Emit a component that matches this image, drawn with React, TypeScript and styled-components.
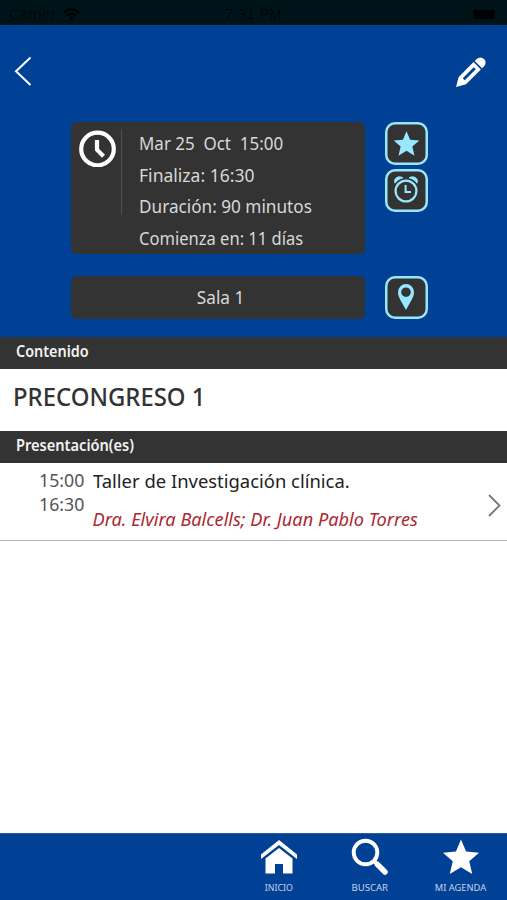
import React from 'react';
import styled, { createGlobalStyle } from 'styled-components';

const BLUE = '#004195';
const DARK = '#333333';
const CYAN = '#97e8ff';

const GlobalStyle = createGlobalStyle`
  * { box-sizing: border-box; }
  body { margin: 0; background: #fff; }
  svg { display: block; flex: none; }
`;

const Screen = styled.div`
  display: flex;
  flex-direction: column;
  height: 900px;
  overflow: hidden;
  font-family: 'Noto Sans', sans-serif;
`;

const Text = styled.span<{ $stretch?: number; $origin?: string }>`
  display: block;
  width: max-content;
  white-space: pre;
  transform: scaleX(${(p) => p.$stretch ?? 1});
  transform-origin: ${(p) => p.$origin ?? 'left'} center;
`;

const StatusBar = styled.header`
  display: grid;
  grid-template-columns: 1fr auto 1fr;
  align-items: center;
  height: 25px;
  flex: none;
  padding: 3px 12px 0 9px;
  background: #001318;
  color: #000608;
  font: 14px 'Liberation Sans', sans-serif;
  letter-spacing: 0.6px;
`;

const Carrier = styled.div`
  display: flex;
  align-items: center;
  gap: 7px;
`;

const Clock = styled.span`
  padding-left: 3px;
  font-weight: 500;
`;

const Battery = styled.div`
  justify-self: end;
  width: 22px;
  height: 9px;
  border-radius: 2px;
  background: #000204;
`;

const Hero = styled.section`
  height: 312px;
  flex: none;
  background: ${BLUE};
`;

const NavBar = styled.nav`
  display: flex;
  justify-content: space-between;
  align-items: center;
  height: 97px;
  padding: 0 20px 6px 14px;
`;

const HeroRow = styled.div<{ $gap?: number }>`
  display: flex;
  gap: 19.5px;
  padding-left: 71px;
  margin-top: ${(p) => p.$gap ?? 0}px;
`;

const InfoCard = styled.div`
  display: flex;
  width: 294px;
  height: 132px;
  padding: 5px 0 0 8px;
  border-radius: 6px;
  background: ${DARK};
`;

const ClockHolder = styled.div`
  display: flex;
  width: 43px;
  height: 86px;
  margin-top: 2px;
  border-right: 1px solid #505050;
`;

const Details = styled.div`
  padding-left: 17px;
  color: #d8d8d8;
  font-size: 18.5px;
  line-height: 31.7px;
`;

const RoomCard = styled.div`
  display: flex;
  align-items: center;
  justify-content: center;
  width: 294px;
  height: 43px;
  padding: 0 0 2px 6px;
  border-radius: 6px;
  background: ${DARK};
  color: #d8d8d8;
  font-size: 18.5px;
`;

const Actions = styled.div`
  display: flex;
  flex-direction: column;
  gap: 3.5px;
`;

const Tile = styled.button`
  display: flex;
  align-items: center;
  justify-content: center;
  width: 43px;
  height: 43px;
  padding: 0 0 1px;
  border: 0;
  border-radius: 10px;
  box-shadow: inset 0 0 0 2.5px ${CYAN};
  background: ${DARK};
  color: ${CYAN};
`;

const SectionBar = styled.h2`
  display: flex;
  align-items: center;
  height: 32px;
  flex: none;
  margin: 0;
  padding: 0 16px 4px;
  background: ${DARK};
  color: #f2f2f2;
  font-size: 16px;
  font-weight: 600;
`;

const Title = styled.h1`
  display: flex;
  align-items: center;
  height: 62px;
  flex: none;
  margin: 0;
  padding: 0 13px 8px;
  color: ${DARK};
  font-size: 24.5px;
  font-weight: 500;
`;

const Session = styled.article`
  display: grid;
  grid-template-columns: 92.5px 1fr auto;
  height: 78px;
  flex: none;
  padding-right: 6px;
  border-bottom: 1px solid #b4b4b4;
`;

const Times = styled.div`
  padding: 6px 0 0 38.5px;
  color: #555;
  font-size: 18px;
  line-height: 23.5px;
`;

const Talk = styled.div`
  padding-top: 5px;
  color: #222;
  font-size: 18.8px;
  line-height: 26px;
`;

const Speakers = styled.div`
  padding-top: 12px;
  color: #ad2830;
  font-size: 18.2px;
  font-style: italic;
`;

const Chevron = styled.div`
  display: flex;
  align-items: center;
  padding-top: 8px;
`;

const TabBar = styled.footer`
  display: flex;
  justify-content: flex-end;
  height: 67px;
  margin-top: auto;
  flex: none;
  padding-right: 1px;
  border-top: 1px solid #2d5d9e;
  background: ${BLUE};
`;

const Tab = styled.div`
  display: flex;
  flex-direction: column;
  align-items: center;
  width: 91px;
  padding-top: 4px;
  color: #fff;
`;

const TabLabel = styled.div`
  margin-top: 5px;
  color: #c4d4ec;
  font-size: 9.3px;
  line-height: 14px;
`;

const STAR = 'M12 1 L15.2 8.6 L23.4 9.3 L17.2 14.7 L19.1 22.8 L12 18.5 L4.9 22.8 L6.8 14.7 L0.6 9.3 L8.8 8.6 Z';

const Star = ({ size }: { size: number }) => (
  <svg width={size} height={size} viewBox="0 0 24 24" fill="currentColor">
    <path d={STAR} />
  </svg>
);

const details: [string, number][] = [
  ['Mar 25  Oct  15:00', 0.916],
  ['Finaliza: 16:30', 0.948],
  ['Duración: 90 minutos', 0.928],
  ['Comienza en: 11 días', 0.894],
];

export default function App() {
  return (
    <Screen>
      <GlobalStyle />
      <StatusBar>
        <Carrier>
          Carrier
          <svg width="17" height="13" viewBox="0 0 17 13" fill="none" stroke="#000204" strokeWidth="2.5">
            <path d="M1 4.7a10.6 10.6 0 0 1 15 0M3.8 7.6a6.6 6.6 0 0 1 9.4 0" />
            <path d="M8.5 12.5 6 9.8a3.6 3.6 0 0 1 5 0Z" fill="#000204" stroke="none" />
          </svg>
        </Carrier>
        <Clock>7:31 PM</Clock>
        <Battery />
      </StatusBar>

      <Hero>
        <NavBar>
          <svg width="18" height="30" viewBox="0 0 18 30" fill="none" stroke="#fff" strokeWidth="2">
            <path d="M16.5 1.5 2 15.2 16.5 29" />
          </svg>
          <svg width="32" height="32" viewBox="0 0 32 32">
            <g transform="translate(1 32) rotate(-45)">
              <path d="M0 0 9-5.2H30V5.2H9Z" fill="#fff" />
              <path d="M31.7-5.2H34.500a5.200 5.200 0 0 1 0 10.400H31.7Z" fill="#fff" />
              <path d="M11-1.4H26.500V1.4H11Z" fill={BLUE} />
            </g>
          </svg>
        </NavBar>

        <HeroRow>
          <InfoCard>
            <ClockHolder>
              <svg width="38" height="38" viewBox="0 0 38 38" fill="none" stroke="#fff">
                <circle cx="18.5" cy="20" r="16.3" strokeWidth="4.2" />
                <path d="M18 11V20.7L24.5 27.2" strokeWidth="4.2" />
              </svg>
            </ClockHolder>
            <Details>
              {details.map(([label, stretch]) => (
                <Text key={label} $stretch={stretch}>{label}</Text>
              ))}
            </Details>
          </InfoCard>
          <Actions>
            <Tile><Star size={27} /></Tile>
            <Tile>
              <svg width="28" height="30" viewBox="0 0 28 30" fill="none" stroke="currentColor" strokeWidth="2.2">
                <circle cx="14" cy="16" r="10.4" />
                <path d="M13.6 10V17H19" strokeWidth="2" />
                <path d="M3 8.2C.8 3 7 .1 11 2.900 7.400 3.700 4.800 5.400 3 8.200ZM25 8.200C27.200 3 21 .1 17 2.900 20.600 3.700 23.200 5.400 25 8.200Z" fill="currentColor" strokeWidth=".8" />
              </svg>
            </Tile>
          </Actions>
        </HeroRow>

        <HeroRow $gap={22}>
          <RoomCard><Text $stretch={0.93} $origin="center">Sala 1</Text></RoomCard>
          <Tile>
            <svg width="18" height="28" viewBox="0 0 18 28">
              <path d="M9 1a8 8 0 0 1 8 8.200C17 14.500 13 19 9 27 5 19 1 14.500 1 9.200A8 8 0 0 1 9 1Zm0 3.400a4.800 4.800 0 1 0 0 9.600 4.800 4.800 0 0 0 0-9.600Z" fill="currentColor" fillRule="evenodd" />
            </svg>
          </Tile>
        </HeroRow>
      </Hero>

      <SectionBar><Text $stretch={0.9}>Contenido</Text></SectionBar>
      <Title><Text $stretch={0.975}>PRECONGRESO 1</Text></Title>
      <SectionBar><Text $stretch={0.912}>Presentación(es)</Text></SectionBar>

      <Session>
        <Times>
          <Text $stretch={0.985}>15:00</Text>
          <Text $stretch={0.985}>16:30</Text>
        </Times>
        <Talk>
          <Text $stretch={0.981}>Taller de Investigación clínica.</Text>
          <Speakers>
            <Text>Dra. Elvira Balcells; Dr. Juan Pablo Torres</Text>
          </Speakers>
        </Talk>
        <Chevron>
          <svg width="13" height="23" viewBox="0 0 13 23" fill="none" stroke="#777" strokeWidth="1.8">
            <path d="M1 1 11.500 11.500 1 22" />
          </svg>
        </Chevron>
      </Session>

      <TabBar>
        <Tab>
          <svg width="38" height="38" viewBox="0 0 38 38" fill="currentColor">
            <path d="M19 2 37 16.500V21L19 7 1 21V16.500Z" />
            <path d="M19 10 32.500 20.500V35.500H23V26H15V35.500H5.500V20.500Z" />
          </svg>
          <TabLabel><Text $stretch={0.95} $origin="center">INICIO</Text></TabLabel>
        </Tab>
        <Tab>
          <svg width="38" height="38" viewBox="0 0 38 38" fill="none" stroke="currentColor">
            <circle cx="14.500" cy="14.500" r="11.800" strokeWidth="3.900" />
            <path d="M22.500 22.500 26 26" strokeWidth="3.900" />
            <path d="M26.500 26.500 34 34" strokeWidth="5.500" strokeLinecap="round" />
          </svg>
          <TabLabel><Text $stretch={1.03} $origin="center">BUSCAR</Text></TabLabel>
        </Tab>
        <Tab>
          <Star size={38} />
          <TabLabel><Text $origin="center">MI AGENDA</Text></TabLabel>
        </Tab>
      </TabBar>
    </Screen>
  );
}
